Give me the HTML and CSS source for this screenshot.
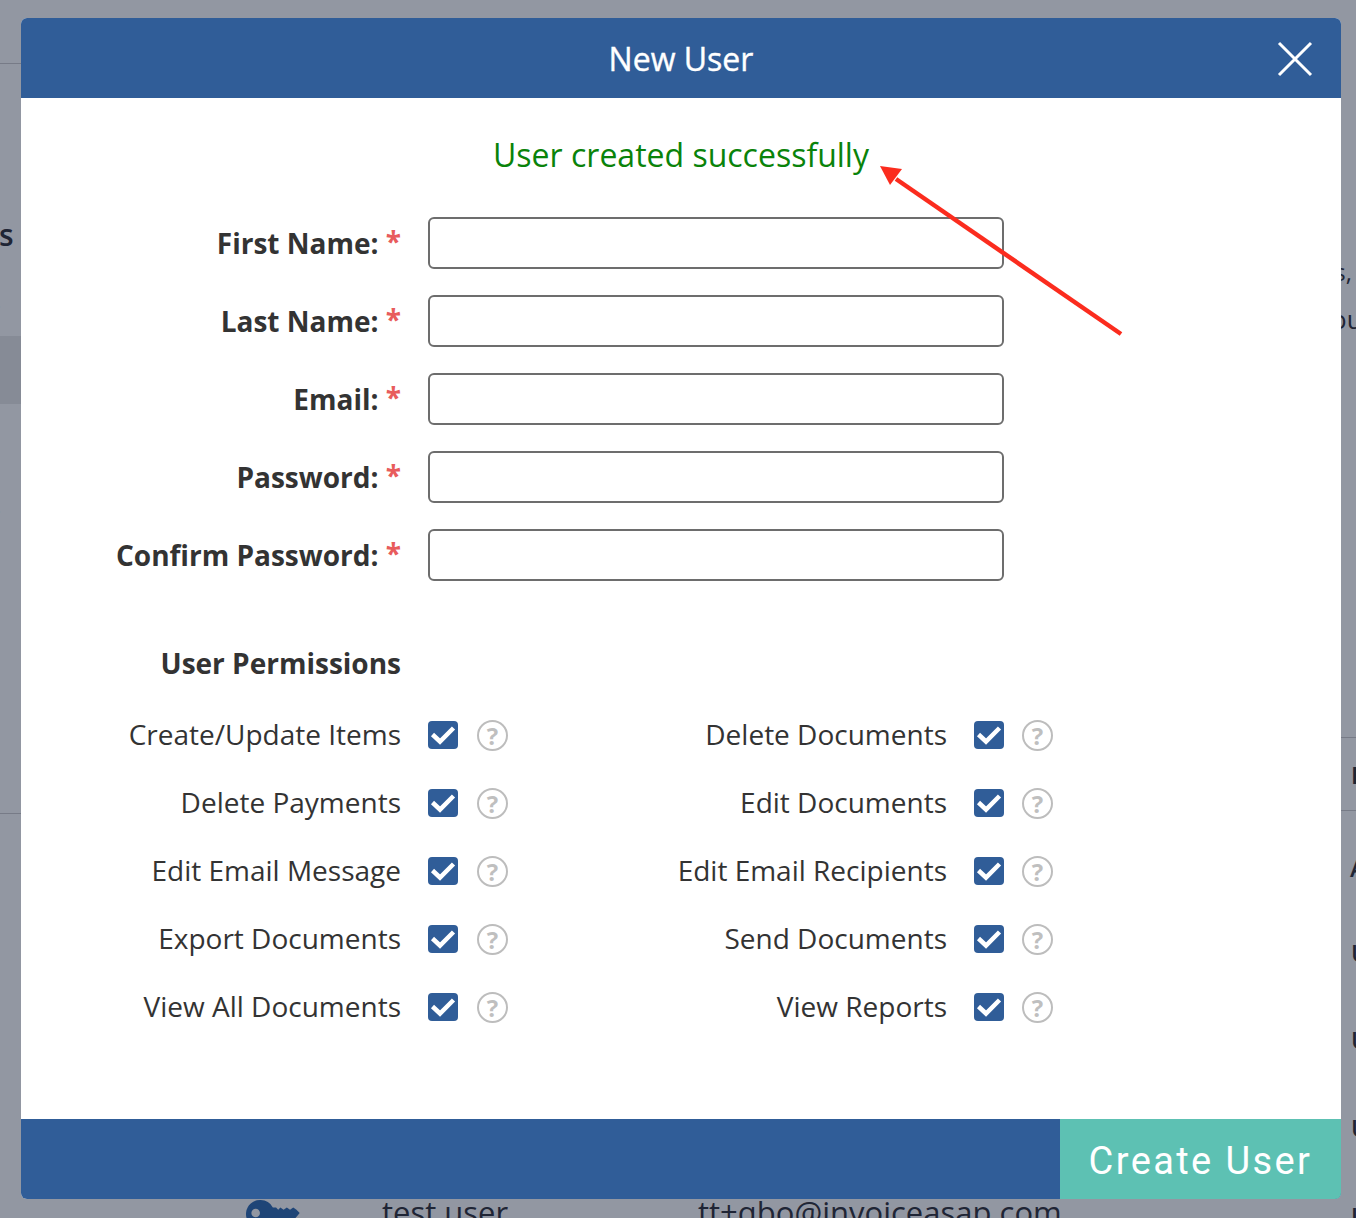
FILE: index.html
```html
<!DOCTYPE html>
<html lang="en">
<head>
    <meta charset="utf-8">
    <title>New User</title>
    <link rel="stylesheet" href="styles.css">
</head>
<body>

    <!-- page behind the dialog, dimmed -->
    <div class="backdrop">
        <div class="rule rule-top"></div>
        <div class="rule rule-left"></div>
        <div class="rule rule-right1"></div>
        <div class="rule rule-right2"></div>
        <div class="band"></div>
        <span class="bg-text bg-s1">s</span>
        <span class="bg-text bg-s2">s</span>
        <span class="bg-text bg-s3">s</span>
        <span class="bg-text bg-r1">s,</span>
        <span class="bg-text bg-r2">ou</span>
        <span class="bg-text bold bg-r3">E</span>
        <span class="bg-text bg-r4">A</span>
        <span class="bg-text bg-r5">U</span>
        <span class="bg-text bg-r6">U</span>
        <span class="bg-text bg-r7">U</span>
        <span class="bg-text bg-r8">U</span>
        <svg class="key" viewBox="0 0 54 26">
            <path d="M13 0a13 13 0 0 1 12 7h3l2 2 2-2 3 2 3-2 3 2 3-2 3 2 3 3-5 6H25a13 13 0 1 1-12-18zM9 8a4 4 0 1 0 0 8 4 4 0 0 0 0-8z"/>
        </svg>
        <span class="bg-text bg-user">test user</span>
        <span class="bg-text bg-mail">tt+qbo@invoiceasap.com</span>
    </div>

    <div class="modal">
        <div class="modal-head">
            <h1>New User</h1>
            <svg class="close" viewBox="0 0 36 36">
                <path d="M2 2l32 32M34 2L2 34"/>
            </svg>
        </div>

        <div class="modal-body">
            <p class="success">User created successfully</p>

            <div class="fields">
                <label class="field-label">First Name: <span class="req">*</span></label>
                <input class="field-input" type="text">
                <label class="field-label">Last Name: <span class="req">*</span></label>
                <input class="field-input" type="text">
                <label class="field-label">Email: <span class="req">*</span></label>
                <input class="field-input" type="text">
                <label class="field-label">Password: <span class="req">*</span></label>
                <input class="field-input" type="password">
                <label class="field-label">Confirm Password: <span class="req">*</span></label>
                <input class="field-input" type="password">
            </div>

            <h2 class="perm-title">User Permissions</h2>

            <div class="perms">
                <span class="perm-label">Create/Update Items</span>
                <span class="check"><svg viewBox="0 0 30 28"><path d="M4.500 13.500l7.500 7L25.500 7"/></svg></span>
                <span class="help">?</span>
                <span class="perm-label">Delete Documents</span>
                <span class="check"><svg viewBox="0 0 30 28"><path d="M4.500 13.500l7.500 7L25.500 7"/></svg></span>
                <span class="help">?</span>

                <span class="perm-label">Delete Payments</span>
                <span class="check"><svg viewBox="0 0 30 28"><path d="M4.500 13.500l7.500 7L25.500 7"/></svg></span>
                <span class="help">?</span>
                <span class="perm-label">Edit Documents</span>
                <span class="check"><svg viewBox="0 0 30 28"><path d="M4.500 13.500l7.500 7L25.500 7"/></svg></span>
                <span class="help">?</span>

                <span class="perm-label">Edit Email Message</span>
                <span class="check"><svg viewBox="0 0 30 28"><path d="M4.500 13.500l7.500 7L25.500 7"/></svg></span>
                <span class="help">?</span>
                <span class="perm-label">Edit Email Recipients</span>
                <span class="check"><svg viewBox="0 0 30 28"><path d="M4.500 13.500l7.500 7L25.500 7"/></svg></span>
                <span class="help">?</span>

                <span class="perm-label">Export Documents</span>
                <span class="check"><svg viewBox="0 0 30 28"><path d="M4.500 13.500l7.500 7L25.500 7"/></svg></span>
                <span class="help">?</span>
                <span class="perm-label">Send Documents</span>
                <span class="check"><svg viewBox="0 0 30 28"><path d="M4.500 13.500l7.500 7L25.500 7"/></svg></span>
                <span class="help">?</span>

                <span class="perm-label">View All Documents</span>
                <span class="check"><svg viewBox="0 0 30 28"><path d="M4.500 13.500l7.500 7L25.500 7"/></svg></span>
                <span class="help">?</span>
                <span class="perm-label">View Reports</span>
                <span class="check"><svg viewBox="0 0 30 28"><path d="M4.500 13.500l7.500 7L25.500 7"/></svg></span>
                <span class="help">?</span>
            </div>
        </div>

        <div class="modal-foot">
            <button class="create-btn">Create User</button>
        </div>
    </div>

    <!-- red annotation arrow drawn on top of the screenshot -->
    <svg class="arrow" viewBox="0 0 260 180">
        <path class="arrow-line" d="M241 168L16 13"/>
        <path class="arrow-head" d="M0 0L22 3 10 19z"/>
    </svg>

</body>
</html>
```

FILE: styles.css
```css
* {
    box-sizing: border-box;
    margin: 0;
    padding: 0;
}

html, body {
    height: 1218px;
    overflow: hidden;
}

body {
    position: relative;
    background: #9297a2;
    font-family: 'Open Sans', sans-serif;
    color: #333;
}

/* page behind */
.backdrop {
    position: absolute;
    top: 0;
    left: 0;
    width: 1356px;
    height: 1218px;
    overflow: hidden;
}

.rule {
    position: absolute;
    height: 1px;
    background: #777b87;
}

.rule-top { top: 63px; left: 0; width: 21px; }
.rule-left { top: 813px; left: 0; width: 21px; }
.rule-right1 { top: 737px; left: 1341px; width: 15px; }
.rule-right2 { top: 810px; left: 1341px; width: 15px; }

.band {
    position: absolute;
    top: 336px;
    left: 0;
    width: 21px;
    height: 68px;
    background: #868b96;
}

.bg-text {
    position: absolute;
    font-size: 26px;
    line-height: 32px;
    color: #1f2535;
    white-space: nowrap;
}

.bold { font-weight: 700; }

.bg-s1 { top: 219px; left: -1px; font-size: 30px; font-weight: 600; }
.bg-s2 { top: 287px; left: -9px; font-size: 20px; color: #555a66; }
.bg-s3 { top: 492px; left: -9px; font-size: 20px; color: #555a66; }
.bg-r1 { top: 256px; right: 4px; font-size: 24px; }
.bg-r2 { top: 303px; left: 1331px; font-size: 26px; }
.bg-r3 { top: 759px; left: 1351px; font-size: 24px; }
.bg-r4 { top: 852px; left: 1350px; font-weight: 600; font-size: 24px; }
.bg-r5 { top: 937px; left: 1351px; font-weight: 600; font-size: 24px; }
.bg-r6 { top: 1024px; left: 1351px; font-weight: 600; font-size: 24px; }
.bg-r7 { top: 1112px; left: 1351px; font-weight: 600; font-size: 24px; }
.bg-r8 { top: 1200px; left: 1351px; font-weight: 600; font-size: 24px; }

.key {
    position: absolute;
    top: 1200px;
    left: 246px;
    width: 58px;
    height: 28px;
    fill: #1f4577;
}

.bg-user { top: 1190px; left: 382px; font-size: 31px; line-height: 44px; }
.bg-mail { top: 1190px; left: 698px; font-size: 31px; line-height: 44px; }

/* dialog */
.modal {
    position: relative;
    width: 1320px;
    height: 1181px;
    margin: 18px 0 0 21px;
    display: flex;
    flex-direction: column;
    background: #fff;
    border-radius: 6px;
    overflow: hidden;
}

.modal-head {
    position: relative;
    flex: 0 0 80px;
    display: flex;
    align-items: center;
    justify-content: center;
    background: #305d98;
    color: #fff;
}

.modal-head h1 {
    margin-top: 2px;
    font-size: 32px;
    font-weight: 400;
    -webkit-text-stroke: 0.4px #fff;
    line-height: 40px;
}

.close {
    position: absolute;
    top: 23px;
    right: 28px;
    width: 36px;
    height: 36px;
    fill: none;
    stroke: #fff;
    stroke-width: 3;
}

.modal-body {
    flex: 1;
}

.success {
    margin-top: 36px;
    text-align: center;
    font-size: 32px;
    line-height: 42px;
    color: #0a830a;
}

.fields {
    display: grid;
    grid-template-columns: 380px 576px;
    column-gap: 27px;
    row-gap: 26px;
    margin-top: 41px;
}

.field-label {
    height: 52px;
    text-align: right;
    font-size: 28px;
    font-weight: 700;
    line-height: 52px;
}

.req {
    color: #e85c5c;
    line-height: 0;
    vertical-align: 2px;
}

.field-input {
    height: 52px;
    border: 2px solid #6d6d6d;
    border-radius: 6px;
    background: #fff;
}

.perm-title {
    width: 380px;
    margin-top: 62px;
    text-align: right;
    font-size: 28px;
    font-weight: 700;
    line-height: 40px;
}

.perms {
    display: grid;
    grid-template-columns: 380px 76px 31px 439px 75px 31px;
    grid-auto-rows: 31px;
    row-gap: 37px;
    margin-top: 36px;
    align-items: center;
}

.perm-label {
    text-align: right;
    font-size: 28px;
    line-height: 31px;
    white-space: nowrap;
}

.check {
    display: block;
    width: 30px;
    height: 28px;
    margin-left: 27px;
    background: #305d98;
    border-radius: 4px;
}

.check svg {
    display: block;
    width: 30px;
    height: 28px;
    fill: none;
    stroke: #fff;
    stroke-width: 4.500;
}

.help {
    display: block;
    width: 31px;
    height: 31px;
    margin-top: 2px;
    border: 2px solid #bdbdbd;
    border-radius: 50%;
    text-align: center;
    font-size: 24px;
    font-weight: 700;
    line-height: 27px;
    color: #bfbfbf;
}

.modal-foot {
    flex: 0 0 80px;
    display: flex;
    justify-content: flex-end;
    background: #305d98;
}

.create-btn {
    width: 281px;
    padding-top: 3px;
    border: 0;
    background: #5dc1b3;
    color: #fff;
    font-family: Roboto, sans-serif;
    font-size: 38px;
    letter-spacing: 2.400px;
}

.arrow {
    position: absolute;
    top: 166px;
    left: 880px;
    width: 260px;
    height: 180px;
}

.arrow-line {
    fill: none;
    stroke: #fb2c1e;
    stroke-width: 4.500;
}

.arrow-head {
    fill: #fb2c1e;
}
```
